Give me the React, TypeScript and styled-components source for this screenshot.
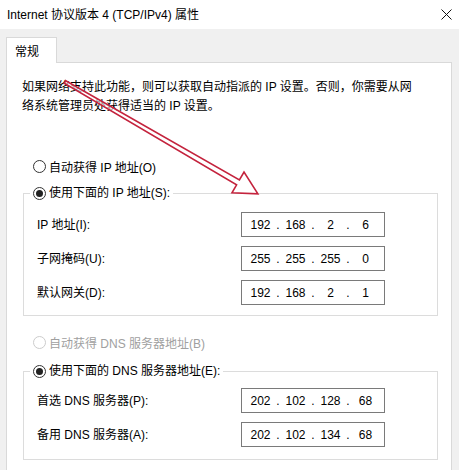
import React from 'react';
import styled, { createGlobalStyle } from 'styled-components';

const GlobalStyle = createGlobalStyle`
  html, body {
    margin: 0;
    padding: 0;
    background: #f0f0f0;
  }
  body {
    font-family: "Liberation Sans", "Noto Sans CJK SC", sans-serif;
    font-size: 12px;
    color: #000;
  }
`;

const Window = styled.div`
  position: relative;
  width: 459px;
  height: 470px;
  overflow: hidden;
  background: #f0f0f0;
`;

const TitleBar = styled.div`
  height: 29px;
  background: #fff;
  display: flex;
  align-items: center;
  justify-content: space-between;
  padding: 0 7px;
  box-sizing: border-box;
  line-height: 16px;
`;

const Body = styled.div`
  padding: 8px 0 0 6px;
`;

const TabStrip = styled.div`
  display: flex;
`;

const Tab = styled.div`
  position: relative;
  z-index: 1;
  width: 51px;
  height: 26px;
  box-sizing: border-box;
  padding-left: 8px;
  display: flex;
  align-items: center;
  background: #fff;
  border: 1px solid #d9d9d9;
  border-bottom: none;
  margin-bottom: -1px;
`;

const Panel = styled.div`
  width: 446px;
  min-height: 430px;
  box-sizing: border-box;
  background: #fff;
  border: 1px solid #d9d9d9;
  padding: 15px 0 0 15px;
`;

const Intro = styled.p`
  margin: 0;
  line-height: 19px;
  white-space: nowrap;
`;

const RadioRow = styled.label<{ $top: number; $disabled?: boolean }>`
  display: flex;
  align-items: center;
  gap: 3px;
  height: 16px;
  margin: ${p => p.$top}px 0 0 11px;
  color: ${p => (p.$disabled ? '#a0a0a0' : '#000')};
`;

const RadioDot = styled.span<{ $checked?: boolean; $disabled?: boolean }>`
  width: 13px;
  height: 13px;
  box-sizing: border-box;
  border-radius: 50%;
  border: 1px solid ${p => (p.$disabled ? '#cccccc' : '#333')};
  background: #fff;
  display: flex;
  align-items: center;
  justify-content: center;
  &::after {
    content: '';
    display: ${p => (p.$checked ? 'block' : 'none')};
    width: 7px;
    height: 7px;
    border-radius: 50%;
    background: #222;
  }
`;

const Group = styled.fieldset<{ $top: number }>`
  width: 415px;
  box-sizing: border-box;
  margin: ${p => p.$top}px 0 0 1px;
  padding: 0;
  border: 1px solid #dcdcdc;
  min-inline-size: 0;
`;

const Legend = styled.legend`
  margin-left: 6px;
  padding: 0 3px;
  line-height: 16px;
  display: flex;
  align-items: center;
  gap: 3px;
`;

const Rows = styled.div<{ $top: number; $bottom: number }>`
  display: grid;
  grid-template-columns: 204px 144px;
  row-gap: 9px;
  padding: ${p => p.$top}px 0 ${p => p.$bottom}px 13px;
  align-items: center;
`;

const FieldLabel = styled.span`
  line-height: 16px;
`;

const IpBox = styled.div`
  height: 25px;
  box-sizing: border-box;
  border: 1px solid #7a7a7a;
  display: flex;
  align-items: center;
  padding-left: 5px;
  font-family: "Liberation Sans", sans-serif;
  font-size: 12px;
`;

const Octet = styled.span`
  width: 27px;
  text-align: center;
`;

const Dot = styled.span`
  width: 8px;
  text-align: center;
`;

const Overlay = styled.svg`
  position: absolute;
  left: 0;
  top: 0;
  pointer-events: none;
`;

const CloseIcon = () => (
  <svg width="11" height="11" viewBox="0 0 11 11">
    <path d="M0.5 0.5 L10.5 10.5 M10.5 0.5 L0.5 10.5" stroke="#111" strokeWidth="1" fill="none" />
  </svg>
);

const IpField: React.FC<{ value: string }> = ({ value }) => {
  const parts = value.split('.');
  return (
    <IpBox>
      {parts.map((p, i) => (
        <React.Fragment key={i}>
          {i > 0 && <Dot>.</Dot>}
          <Octet>{p}</Octet>
        </React.Fragment>
      ))}
    </IpBox>
  );
};

const ipRows = [
  { label: 'IP 地址(I):', value: '192.168.2.6' },
  { label: '子网掩码(U):', value: '255.255.255.0' },
  { label: '默认网关(D):', value: '192.168.2.1' },
];

const dnsRows = [
  { label: '首选 DNS 服务器(P):', value: '202.102.128.68' },
  { label: '备用 DNS 服务器(A):', value: '202.102.134.68' },
];

export default function App() {
  return (
    <>
      <GlobalStyle />
      <Window>
        <TitleBar>
          <span>Internet 协议版本 4 (TCP/IPv4) 属性</span>
          <CloseIcon />
        </TitleBar>
        <Body>
          <TabStrip>
            <Tab>常规</Tab>
          </TabStrip>
          <Panel>
            <Intro>
              如果网络支持此功能，则可以获取自动指派的 IP 设置。否则，你需要从网
              <br />
              络系统管理员处获得适当的 IP 设置。
            </Intro>

            <RadioRow $top={42}>
              <RadioDot />
              自动获得 IP 地址(O)
            </RadioRow>
            <Group $top={11}>
              <Legend>
                <RadioDot $checked />
                使用下面的 IP 地址(S):
              </Legend>
              <Rows $top={11} $bottom={10}>
                {ipRows.map(r => (
                  <React.Fragment key={r.label}>
                    <FieldLabel>{r.label}</FieldLabel>
                    <IpField value={r.value} />
                  </React.Fragment>
                ))}
              </Rows>
            </Group>

            <RadioRow $top={18} $disabled>
              <RadioDot $disabled />
              自动获得 DNS 服务器地址(B)
            </RadioRow>
            <Group $top={13}>
              <Legend>
                <RadioDot $checked />
                使用下面的 DNS 服务器地址(E):
              </Legend>
              <Rows $top={9} $bottom={12}>
                {dnsRows.map(r => (
                  <React.Fragment key={r.label}>
                    <FieldLabel>{r.label}</FieldLabel>
                    <IpField value={r.value} />
                  </React.Fragment>
                ))}
              </Rows>
            </Group>
          </Panel>
        </Body>

        {/* annotation arrow drawn over the dialog */}
        <Overlay width="459" height="470" viewBox="0 0 459 470">
          <g transform="translate(65 82) rotate(30.12)">
            <polygon
              points="0,-1.5 200,-2.8 200,-12 223,0 200,12 200,2.8 0,1.5"
              fill="rgba(255,255,255,0.55)"
              stroke="#c4233d"
              strokeWidth="1.6"
              strokeLinejoin="miter"
            />
          </g>
        </Overlay>
      </Window>
    </>
  );
}
